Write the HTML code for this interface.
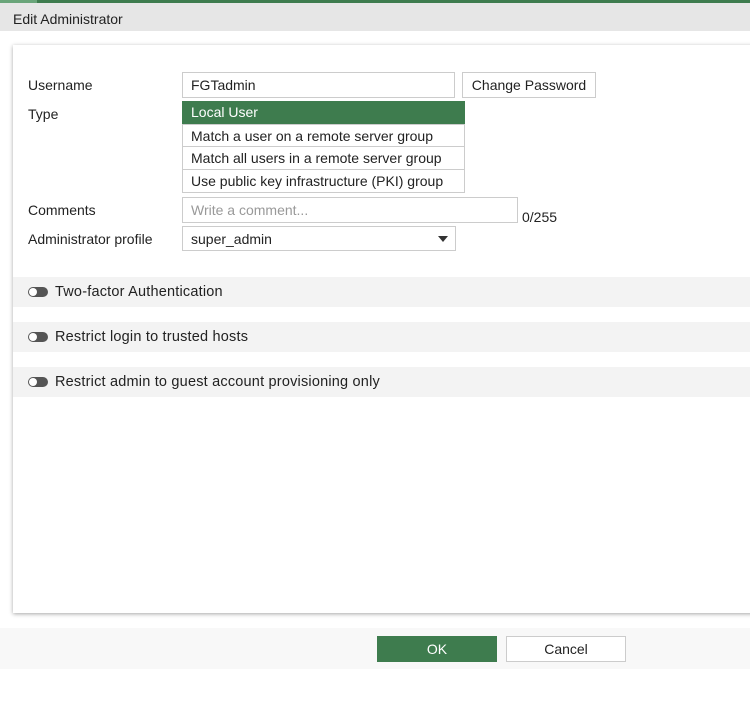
<!DOCTYPE html>
<html><head><style>
body{margin:0;width:750px;height:723px;background:#fff;font-family:"Liberation Sans",sans-serif;font-size:14px;color:#222;position:relative;overflow:hidden}
.a{position:absolute}
.inp{position:absolute;border:1px solid #ccc;box-sizing:border-box;background:#fff;padding-left:8px;line-height:25px}
.sec{position:absolute;left:13px;width:737px;height:30px;background:#f3f3f3}
.sec .t{position:absolute;left:42px;top:7px;font-size:14.5px;letter-spacing:0.2px}
.tg{position:absolute;left:15px;top:10px;width:20px;height:10px;border-radius:5px;background:#555}
.tg:after{content:"";position:absolute;left:1px;top:1px;width:8px;height:8px;border-radius:50%;background:#fff}
.opt{position:absolute;left:182px;width:283px;height:23px;box-sizing:border-box;border:1px solid #ccc;border-top:none;padding-left:8px;line-height:23px;background:#fff}
</style></head><body>
<div class="a" style="left:0;top:0;width:750px;height:3px;background:#3e7c4e"></div>
<div class="a" style="left:0;top:0;width:37px;height:3px;background:#6aa57a"></div>
<div class="a" style="left:0;top:3px;width:750px;height:28px;background:#e6e6e6"></div>
<div class="a" style="left:13px;top:11px;font-size:14px">Edit Administrator</div>
<div class="a" style="left:13px;top:45px;width:745px;height:568px;background:#fff;box-shadow:0 1px 4px rgba(0,0,0,.35)"></div>
<div class="a" style="left:28px;top:77px">Username</div>
<div class="inp" style="left:182px;top:72px;width:273px;height:26px">FGTadmin</div>
<div class="inp" style="left:462px;top:72px;width:134px;height:26px;text-align:center;padding:0">Change Password</div>
<div class="a" style="left:28px;top:106px">Type</div>
<div class="opt" style="top:101px;background:#3e7c4e;color:#fff;border:none;height:23px;padding-left:9px">Local User</div>
<div class="opt" style="top:124px;border-top:1px solid #ccc">Match a user on a remote server group</div>
<div class="opt" style="top:147px">Match all users in a remote server group</div>
<div class="opt" style="top:170px">Use public key infrastructure (PKI) group</div>
<div class="a" style="left:28px;top:202px">Comments</div>
<div class="inp" style="left:182px;top:197px;width:336px;height:26px;color:#999">Write a comment...</div>
<div class="a" style="left:522px;top:209px">0/255</div>
<div class="a" style="left:28px;top:231px">Administrator profile</div>
<div class="inp" style="left:182px;top:226px;width:274px;height:25px">super_admin</div>
<div class="a" style="left:438px;top:236px;width:0;height:0;border-left:5px solid transparent;border-right:5px solid transparent;border-top:6px solid #333"></div>
<div class="sec" style="top:277px"><div class="tg"></div><div class="t">Two-factor Authentication</div></div>
<div class="sec" style="top:322px"><div class="tg"></div><div class="t">Restrict login to trusted hosts</div></div>
<div class="sec" style="top:367px"><div class="tg"></div><div class="t">Restrict admin to guest account provisioning only</div></div>
<div class="a" style="left:0;top:628px;width:750px;height:41px;background:#f8f8f8"></div>
<div class="a" style="left:377px;top:636px;width:120px;height:26px;background:#3e7c4e;color:#fff;text-align:center;line-height:26px">OK</div>
<div class="a" style="left:506px;top:636px;width:120px;height:26px;box-sizing:border-box;border:1px solid #ccc;background:#fff;text-align:center;line-height:24px">Cancel</div>
</body></html>
